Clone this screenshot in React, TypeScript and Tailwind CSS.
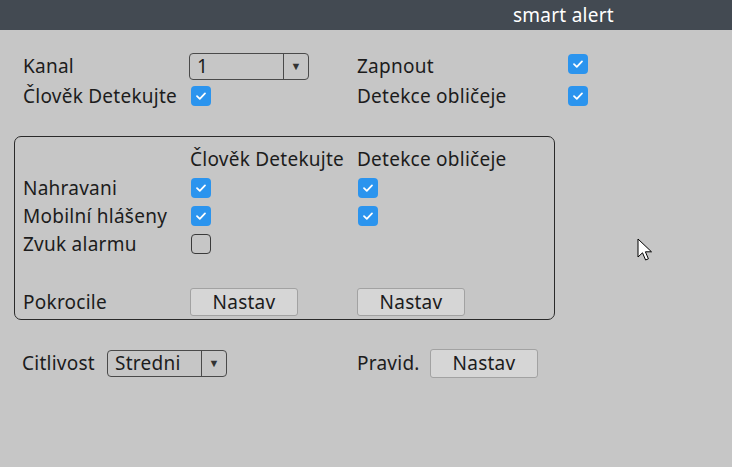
const font = { fontFamily: '"Noto Sans", "Open Sans", sans-serif' };

function Check({ on = true }: { on?: boolean }) {
  if (!on) {
    return <div className="h-[20px] w-[20px] rounded-[4px] border border-[#3a3a3a]" />;
  }
  return (
    <div className="flex h-[20px] w-[20px] items-center justify-center rounded-[4px] bg-[#2b94ee]">
      <svg width="12" height="10" viewBox="0 0 12 10" fill="none">
        <path d="M2 5.2 L4.8 7.8 L10 2.4" stroke="#fff" strokeWidth="1.8" strokeLinecap="round" strokeLinejoin="round" />
      </svg>
    </div>
  );
}

function Dropdown({ value, width }: { value: string; width: string }) {
  return (
    <div className={`flex h-[27px] items-stretch rounded-[4px] border border-[#4a4a4a] ${width}`}>
      <div className="flex flex-1 items-center pl-[7px]">{value}</div>
      <div className="flex w-[25px] items-center justify-center border-l border-[#4a4a4a] text-[11px] text-[#333]">▼</div>
    </div>
  );
}

function NastavButton({ width }: { width: string }) {
  return (
    <div className={`flex h-[28px] items-center justify-center rounded-[3px] border border-[#a2a2a2] bg-[#d6d6d6] ${width}`}>
      Nastav
    </div>
  );
}

export default function App() {
  return (
    <div className="relative h-[467px] w-[732px] overflow-hidden bg-[#c6c6c6] text-[19px] tracking-[0.25px] text-[#1c1c1c]" style={font}>
      {/* Title bar */}
      <div className="flex h-[30px] items-center bg-[#434a52] pl-[513px] text-white">smart alert</div>

      {/* Top settings */}
      <div className="mt-[23px] grid grid-cols-[166px_168px_211px_20px] pl-[23px]">
        <div className="flex h-[27px] items-center">Kanal</div>
        <Dropdown value="1" width="w-[120px]" />
        <div className="flex h-[27px] items-center">Zapnout</div>
        <div className="pt-[1px]"><Check /></div>

        <div className="mt-[3px] flex h-[26px] items-center">Člověk Detekujte</div>
        <div className="mt-[3px] flex h-[26px] items-center pl-[2px]"><Check /></div>
        <div className="mt-[3px] flex h-[26px] items-center">Detekce obličeje</div>
        <div className="mt-[3px] flex h-[26px] items-center"><Check /></div>
      </div>

      {/* Actions box */}
      <div className="ml-[14px] mt-[27px] h-[184px] w-[541px] rounded-[7px] border border-[#2a2a2a] pl-[8px] pt-[10px]">
        <div className="grid grid-cols-[167px_167px_1fr]">
          <div className="h-[24px]" />
          <div className="flex h-[24px] items-center">Člověk Detekujte</div>
          <div className="flex h-[24px] items-center">Detekce obličeje</div>
        </div>
        <div className="mt-[3px] grid grid-cols-[167px_167px_1fr]">
          <div className="flex h-[28px] items-center">Nahravani</div>
          <div className="flex h-[28px] items-center pl-[1px]"><Check /></div>
          <div className="flex h-[28px] items-center pl-[1px]"><Check /></div>

          <div className="flex h-[28px] items-center">Mobilní hlášeny</div>
          <div className="flex h-[28px] items-center pl-[1px]"><Check /></div>
          <div className="flex h-[28px] items-center pl-[1px]"><Check /></div>

          <div className="flex h-[28px] items-center">Zvuk alarmu</div>
          <div className="flex h-[28px] items-center pl-[1px]"><Check on={false} /></div>
          <div className="h-[28px]" />
        </div>
        <div className="mt-[30px] grid grid-cols-[167px_167px_1fr]">
          <div className="flex h-[28px] items-center">Pokrocile</div>
          <NastavButton width="w-[108px]" />
          <NastavButton width="w-[108px]" />
        </div>
      </div>

      {/* Bottom row */}
      <div className="mt-[29px] flex items-center pl-[22px]">
        <div className="w-[85px]">Citlivost</div>
        <Dropdown value="Stredni" width="w-[120px]" />
        <div className="w-[130px]" />
        <div className="w-[73px]">Pravid.</div>
        <NastavButton width="w-[108px] h-[29px]" />
      </div>

      {/* Mouse pointer */}
      <svg className="absolute left-[637px] top-[238px]" width="18" height="26" viewBox="0 0 18 26">
        <path d="M1 1 L1 19 L5.5 14.8 L8.6 22 L11.4 20.8 L8.4 13.8 L14.5 13.8 Z" fill="#fff" stroke="#000" strokeWidth="1" strokeLinejoin="round" />
      </svg>
    </div>
  );
}
